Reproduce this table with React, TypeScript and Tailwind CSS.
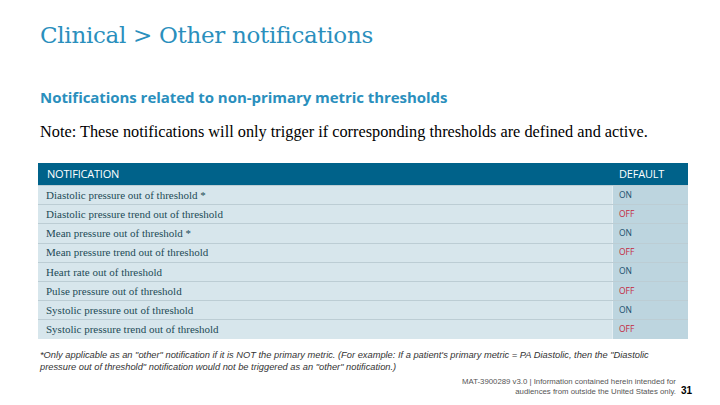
const rows: { name: string; on: boolean }[] = [
  { name: "Diastolic pressure out of threshold *", on: true },
  { name: "Diastolic pressure trend out of threshold", on: false },
  { name: "Mean pressure out of threshold *", on: true },
  { name: "Mean pressure trend out of threshold", on: false },
  { name: "Heart rate out of threshold", on: true },
  { name: "Pulse pressure out of threshold", on: false },
  { name: "Systolic pressure out of threshold", on: true },
  { name: "Systolic pressure trend out of threshold", on: false },
];

export default function App() {
  return (
    <div className="w-[720px] h-[405px] bg-white overflow-hidden flex flex-col">
      <h1 className="ml-[40px] mt-[18px] h-[34px] text-[23px] leading-[34px] text-[#2a8fbd] font-['DejaVu_Serif',serif] tracking-[-0.3px]">
        Clinical &gt; Other notifications
      </h1>

      <h2 className="ml-[40px] mt-[35px] h-[20px] text-[15px] leading-[20px] font-bold text-[#2a8fbd] font-['Open_Sans',sans-serif] tracking-[-0.05px]">
        Notifications related to non-primary metric thresholds
      </h2>

      <p className="ml-[40px] mt-[15px] h-[20px] text-[16.3px] leading-[20px] text-black font-['Liberation_Serif',serif]">
        Note: These notifications will only trigger if corresponding thresholds are defined and active.
      </p>

      <div className="ml-[38px] mt-[21px] w-[650px] flex flex-col">
        <div className="flex h-[22px] bg-[#00628a] text-white text-[11px] font-['Open_Sans',sans-serif] tracking-[-0.2px]">
          <div className="flex-1 pl-[9px] flex items-center">NOTIFICATION</div>
          <div className="w-[76px] pl-[7px] flex items-center">DEFAULT</div>
        </div>
        {rows.map((r) => (
          <div
            key={r.name}
            className="flex h-[19.2px] border-t border-[#bccdd4]"
          >
            <div className="flex-1 bg-[#d7e6ec] pl-[8px] flex items-center text-[11px] text-[#1d4b57] font-['Liberation_Serif',serif]">
              {r.name}
            </div>
            <div
              className={
                r.on
                  ? "w-[76px] bg-[#bdd5df] border-l border-[#e4eef2] pl-[6px] flex items-center text-[8.5px] text-[#1c4f6e] font-['Open_Sans',sans-serif]"
                  : "w-[76px] bg-[#bdd5df] border-l border-[#e4eef2] pl-[6px] flex items-center text-[8.5px] text-[#c4283f] font-['Open_Sans',sans-serif]"
              }
            >
              {r.on ? "ON" : "OFF"}
            </div>
          </div>
        ))}
      </div>

      <p className="ml-[40px] mt-[10px] text-[9.3px] leading-[12px] italic text-[#333] font-['Liberation_Sans',sans-serif] whitespace-nowrap">
        *Only applicable as an &quot;other&quot; notification if it is NOT the primary metric. (For example: If a patient&apos;s primary metric = PA Diastolic, then the &quot;Diastolic
        <br />
        pressure out of threshold&quot; notification would not be triggered as an &quot;other&quot; notification.)
      </p>

      <div className="mt-[4px] mr-[28px] flex justify-end items-end gap-[5px]">
        <div className="text-right text-[7.8px] leading-[10px] text-[#555] font-['Liberation_Sans',sans-serif]">
          <div>MAT-3900289 v3.0 | Information contained herein intended for</div>
          <div>audiences from outside the United States only.</div>
        </div>
        <div className="text-[10px] leading-[12px] font-bold text-black font-['Liberation_Sans',sans-serif]">31</div>
      </div>
    </div>
  );
}
